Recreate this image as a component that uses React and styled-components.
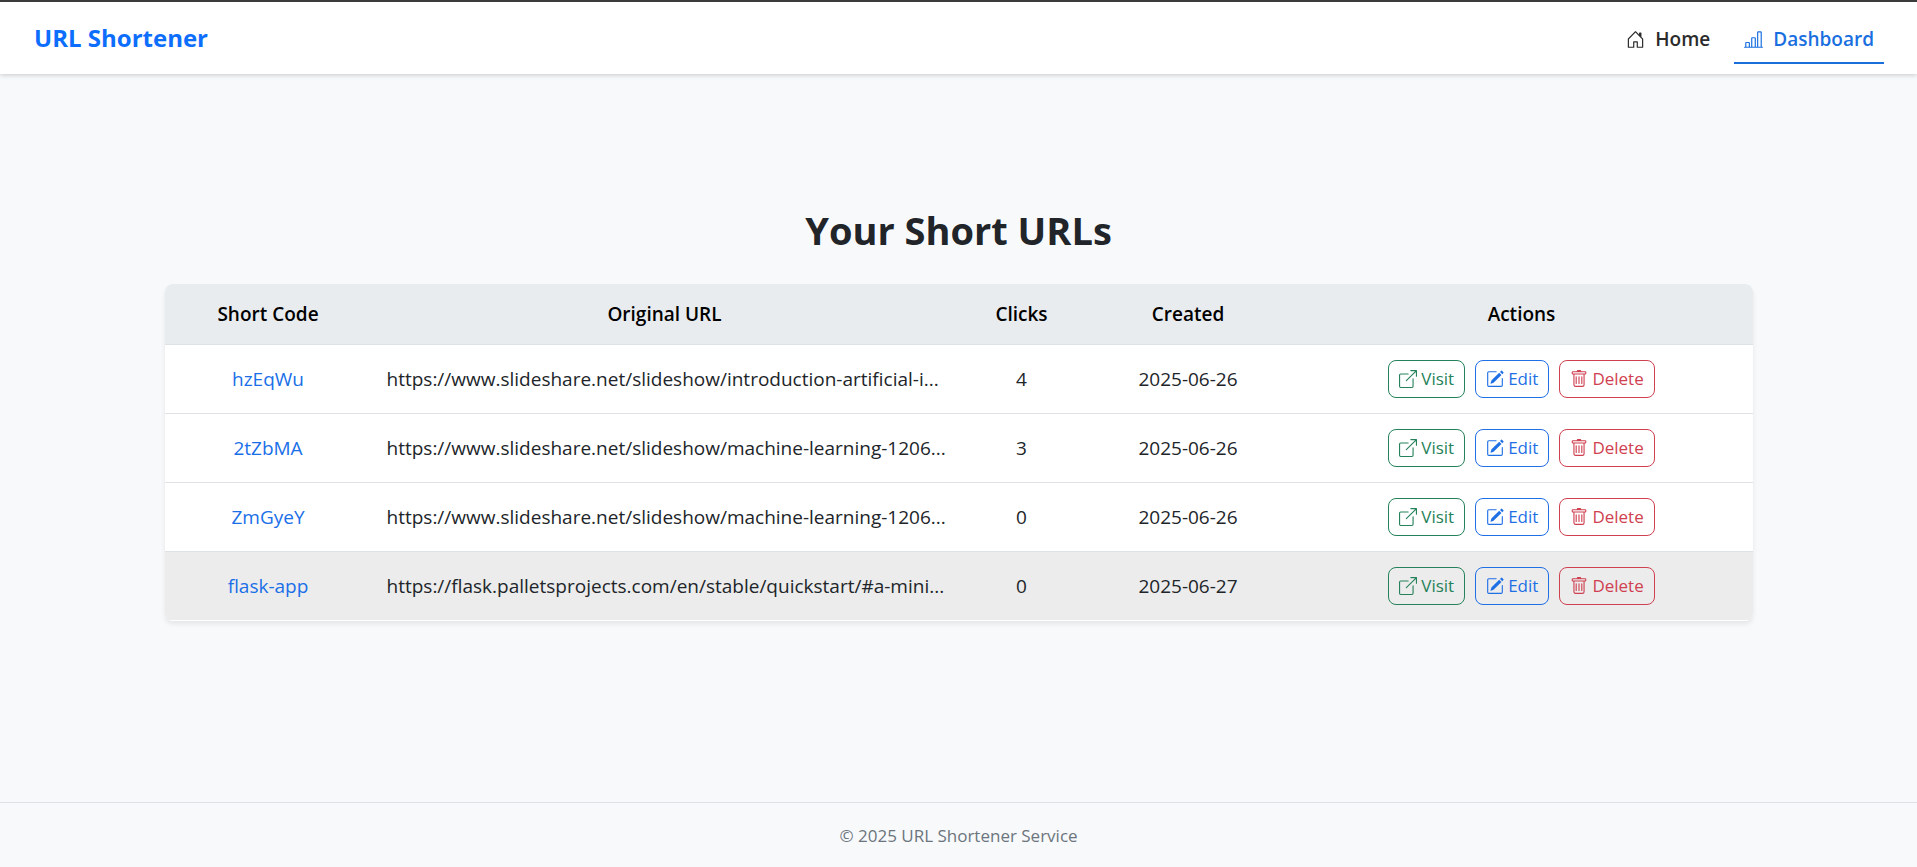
import React from "react";
import styled, { createGlobalStyle, css } from "styled-components";
import {
  BsHouseDoor,
  BsBarChartLine,
  BsBoxArrowUpRight,
  BsPencilSquare,
  BsTrash,
} from "react-icons/bs";

const GlobalStyle = createGlobalStyle`
  *, *::before, *::after { box-sizing: border-box; }
  body {
    margin: 0;
    background: #f8f9fb;
    color: #212529;
    font-family: "Segoe UI", "Open Sans", "Noto Sans", sans-serif;
    font-size: 19px;
    line-height: 30px;
  }
`;

const Page = styled.div`
  min-height: 100vh;
  display: flex;
  flex-direction: column;
`;

const Header = styled.header`
  position: relative;
  display: flex;
  align-items: center;
  justify-content: space-between;
  height: 74px;
  padding: 0 33px 0 34px;
  border-top: 2px solid #3b3b3b;
  background: #fff;
  box-shadow: 0 1px 5px rgba(0, 0, 0, 0.2);
`;

const Brand = styled.a`
  color: #0d6efd;
  font-size: 24px;
  font-weight: 700;
  text-decoration: none;
`;

const Nav = styled.nav`
  display: flex;
  gap: 14px;
`;

const NavLink = styled.a`
  display: flex;
  align-items: center;
  gap: 10px;
  padding: 12px 10px 8px;
  border-bottom: 2px solid ${(p) => (p.$active ? "#1a6fdb" : "transparent")};
  color: ${(p) => (p.$active ? "#1a6fe0" : "#2b2b2b")};
  font-weight: 600;
  text-decoration: none;
`;

const Main = styled.main`
  flex: 1;
  display: flex;
  flex-direction: column;
  align-items: center;
  justify-content: center;
  padding: 20px 24px;
`;

const Title = styled.h1`
  margin: 0 0 30px;
  font-size: 38px;
  line-height: 48px;
  font-weight: 700;
  text-align: center;
`;

const TableCard = styled.div`
  width: 100%;
  max-width: 1588px;
  margin-bottom: 50px;
  overflow: hidden;
  border-radius: 8px;
  background: #fff;
  box-shadow: 0 3px 5px rgba(0, 0, 0, 0.08);
`;

const Table = styled.table`
  width: 100%;
  table-layout: fixed;
  border-collapse: collapse;
`;

const Col = styled.col`
  width: ${(p) => (p.$width ? `${p.$width}px` : "auto")};
`;

const HeadCell = styled.th`
  padding: 15px;
  border-bottom: 1px solid #dee2e6;
  background: #e9ecef;
  color: #000;
  font-weight: 600;
  text-align: center;
`;

const Row = styled.tr`
  background: ${(p) => (p.$active ? "#ececec" : "#fff")};
  &:last-child td { border-bottom-color: #fff; }
`;

const Cell = styled.td`
  padding: 15px;
  border-bottom: 1px solid #dee2e6;
  text-align: ${(p) => (p.$align ? p.$align : "center")};
  white-space: nowrap;
`;

const CodeLink = styled.a`
  color: #1a6fe8;
  text-decoration: none;
`;

const Actions = styled.div`
  display: flex;
  justify-content: center;
  gap: 10px;
`;

const tones = { visit: "#25825a", edit: "#1f6fe5", remove: "#cf4150" };

const actionStyle = css`
  display: inline-flex;
  align-items: center;
  gap: 4px;
  height: 38px;
  padding: 0 10px;
  border: 1px solid ${(p) => tones[p.$tone]};
  border-radius: 8px;
  background: transparent;
  color: ${(p) => tones[p.$tone]};
  font-family: inherit;
  font-size: 17px;
  text-decoration: none;
`;

const ActionLink = styled.a`${actionStyle}`;
const ActionButton = styled.button`${actionStyle}`;

const Footer = styled.footer`
  padding: 20px 24px 18px;
  border-top: 1px solid #dee2e6;
  color: #6c757d;
  font-size: 17px;
  line-height: 26px;
  text-align: center;
`;

const columns = [
  { name: "Short Code", width: 207 },
  { name: "Original URL" },
  { name: "Clicks", width: 128 },
  { name: "Created", width: 205 },
  { name: "Actions", width: 462 },
];

const links = [
  { code: "hzEqWu", url: "https://www.slideshare.net/slideshow/introduction-artificial-i...", clicks: 4, created: "2025-06-26" },
  { code: "2tZbMA", url: "https://www.slideshare.net/slideshow/machine-learning-1206...", clicks: 3, created: "2025-06-26" },
  { code: "ZmGyeY", url: "https://www.slideshare.net/slideshow/machine-learning-1206...", clicks: 0, created: "2025-06-26" },
  { code: "flask-app", url: "https://flask.palletsprojects.com/en/stable/quickstart/#a-mini...", clicks: 0, created: "2025-06-27", active: true },
];

export default function App() {
  return (
    <Page>
      <GlobalStyle />
      <Header>
        <Brand href="#home">URL Shortener</Brand>
        <Nav>
          <NavLink href="#home"><BsHouseDoor size={19} />Home</NavLink>
          <NavLink href="#dashboard" $active aria-current="page"><BsBarChartLine size={19} />Dashboard</NavLink>
        </Nav>
      </Header>
      <Main>
        <Title>Your Short URLs</Title>
        <TableCard>
          <Table>
            <colgroup>
              {columns.map((c) => <Col key={c.name} $width={c.width} />)}
            </colgroup>
            <thead>
              <tr>
                {columns.map((c) => <HeadCell key={c.name} scope="col">{c.name}</HeadCell>)}
              </tr>
            </thead>
            <tbody>
              {links.map((l) => (
                <Row key={l.code} $active={l.active}>
                  <Cell><CodeLink href={`#${l.code}`}>{l.code}</CodeLink></Cell>
                  <Cell $align="left">{l.url}</Cell>
                  <Cell>{l.clicks}</Cell>
                  <Cell>{l.created}</Cell>
                  <Cell>
                    <Actions>
                      <ActionLink $tone="visit" href={`#${l.code}`}><BsBoxArrowUpRight size={18} />Visit</ActionLink>
                      <ActionLink $tone="edit" href={`#edit-${l.code}`}><BsPencilSquare size={18} />Edit</ActionLink>
                      <ActionButton $tone="remove" type="button"><BsTrash size={18} />Delete</ActionButton>
                    </Actions>
                  </Cell>
                </Row>
              ))}
            </tbody>
          </Table>
        </TableCard>
      </Main>
      <Footer>© 2025 URL Shortener Service</Footer>
    </Page>
  );
}
